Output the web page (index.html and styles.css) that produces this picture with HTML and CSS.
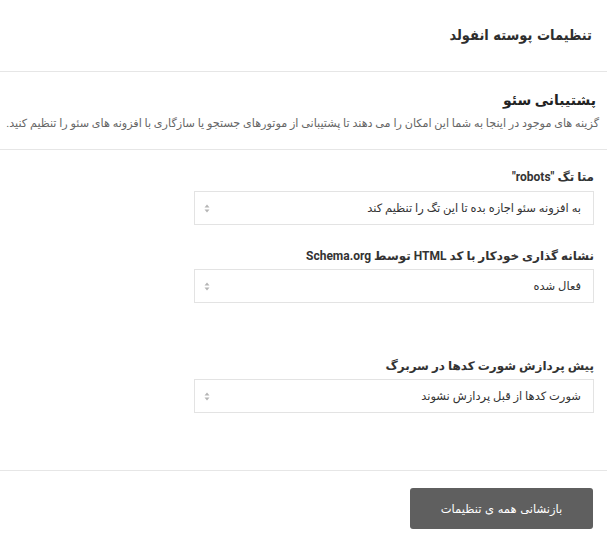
FILE: index.html
```html
<!DOCTYPE html>
<html lang="fa" dir="rtl">
<head>
<meta charset="utf-8">
<title>تنظیمات پوسته انفولد</title>
<link rel="stylesheet" href="styles.css">
</head>
<body>
<div class="page">
  <header class="page-head">
    <h1 class="page-title">تنظیمات پوسته انفولد</h1>
  </header>
  <section class="section-head">
    <h2 class="section-title">پشتیبانی سئو</h2>
    <p class="section-desc">گزینه های موجود در اینجا به شما این امکان را می دهند تا پشتیبانی از موتورهای جستجو یا سازگاری با افزونه های سئو را تنظیم کنید.</p>
  </section>
  <div class="fields">
    <div class="field">
      <label class="field-label">متا تگ "robots"</label>
      <div class="select">
        <span class="select-value">به افزونه سئو اجازه بده تا این تگ را تنظیم کند</span>
        <span class="arrows"><svg width="6" height="9" viewBox="0 0 6 9"><path d="M3 0.5L5.5 3.5H0.5Z" fill="#b5b5b5"/><path d="M3 8.5L5.5 5.5H0.5Z" fill="#b5b5b5"/></svg></span>
      </div>
    </div>
    <div class="field">
      <label class="field-label">نشانه گذاری خودکار با کد HTML توسط Schema.org</label>
      <div class="select">
        <span class="select-value">فعال شده</span>
        <span class="arrows"><svg width="6" height="9" viewBox="0 0 6 9"><path d="M3 0.5L5.5 3.5H0.5Z" fill="#b5b5b5"/><path d="M3 8.5L5.5 5.5H0.5Z" fill="#b5b5b5"/></svg></span>
      </div>
    </div>
    <div class="field field-spaced">
      <label class="field-label">پیش پردازش شورت کدها در سربرگ</label>
      <div class="select">
        <span class="select-value">شورت کدها از قبل پردازش نشوند</span>
        <span class="arrows"><svg width="6" height="9" viewBox="0 0 6 9"><path d="M3 0.5L5.5 3.5H0.5Z" fill="#b5b5b5"/><path d="M3 8.5L5.5 5.5H0.5Z" fill="#b5b5b5"/></svg></span>
      </div>
    </div>
  </div>
  <footer class="page-foot">
    <button class="reset-btn" type="button">بازنشانی همه ی تنظیمات</button>
  </footer>
</div>
</body>
</html>
```
FILE: styles.css
```css
html, body {
  margin: 0;
  padding: 0;
  background: #ffffff;
}
body {
  font-family: Roboto, "DejaVu Sans", sans-serif;
  color: #333333;
}
.page {
  width: 607px;
}
.page-head {
  height: 72px;
  border-bottom: 1px solid #e6e6e6;
  display: flex;
  align-items: center;
  padding: 0 15px;
  box-sizing: border-box;
}
.page-title {
  margin: 0 0 2px 0;
  font-family: "DejaVu Sans Condensed", "DejaVu Sans", sans-serif;
  font-size: 14.5px;
  font-weight: bold;
  color: #2e2e2e;
}
.section-head {
  padding: 18px 11px 0 4px;
  height: 78px;
  box-sizing: border-box;
  border-bottom: 1px solid #e6e6e6;
}
.section-title {
  margin: 0;
  font-size: 14px;
  font-weight: bold;
  line-height: 20px;
  color: #222222;
}
.section-desc {
  margin: 6px -3px 0 0;
  font-size: 11.2px;
  line-height: 16px;
  color: #666666;
  white-space: nowrap;
}
.fields {
  padding: 18px 13px 0 0;
  height: 321px;
  box-sizing: border-box;
  border-bottom: 1px solid #e6e6e6;
}
.field {
  width: 400px;
  margin-bottom: 22px;
}
.field-spaced {
  margin-top: 54px;
}
.field-label {
  display: block;
  font-size: 12px;
  font-weight: bold;
  line-height: 18px;
  color: #333333;
  margin-bottom: 5px;
}
.field + .field .field-label {
  margin-bottom: 4px;
}
.select {
  height: 34px;
  box-sizing: border-box;
  border: 1px solid #e3e3e3;
  display: flex;
  align-items: center;
  justify-content: space-between;
  padding: 0 12px 0 9px;
}
.select-value {
  font-size: 11.5px;
  color: #333333;
}
.arrows {
  display: flex;
  align-items: center;
}
.page-foot {
  padding: 17px 14px 0 0;
}
.reset-btn {
  width: 183px;
  height: 41px;
  background: #5f5f5f;
  color: #ffffff;
  border: none;
  border-radius: 3px;
  font-family: "DejaVu Sans", sans-serif;
  font-size: 11.5px;
  cursor: pointer;
}
```
